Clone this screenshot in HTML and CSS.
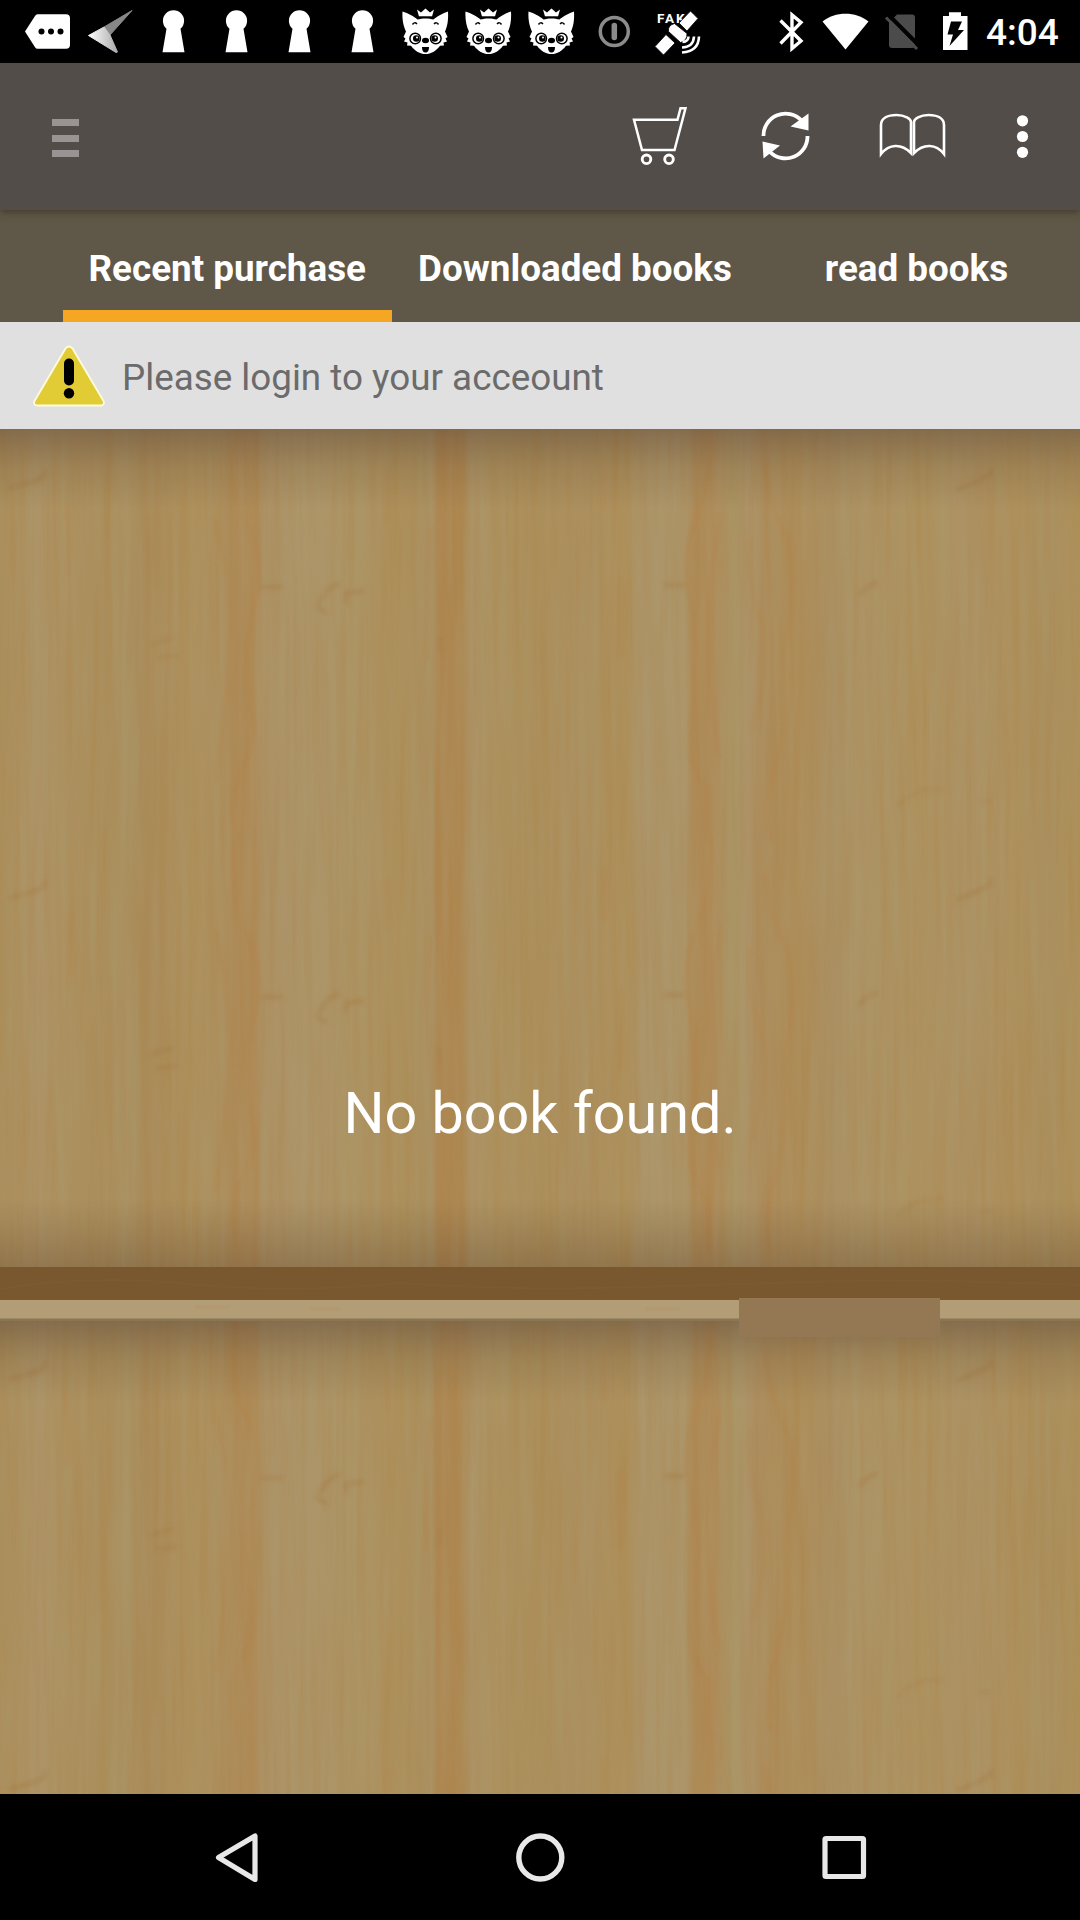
FILE: index.html
```html
<!DOCTYPE html>
<html lang="en">
<head>
<meta charset="utf-8">
<title>Bookshelf</title>
<link rel="stylesheet" href="styles.css">
</head>
<body>
<svg class="defs" width="0" height="0" aria-hidden="true">
  <defs>
    <symbol id="keyhole" viewBox="0 0 63 63"><path fill="#fff" d="M24.5 28.8a10.6 10.6 0 1 1 14 0L42.500 52.300h-22z"/></symbol>
    <symbol id="fox" viewBox="0 0 63 63">
      <path fill="#fff" d="M23 9.500l4 3 4.500-4 4.500 4 4-3-2 7H25z"/>
      <path fill="none" stroke="#000" stroke-width="1.500" d="M24 17.300h15"/>
      <path fill="#fff" d="M8.500 11.500C14 13 20 16.500 23.500 19.500 28 18 35 18 39.500 19.500 43 16.500 49 13 54 11.500 54.500 20 53.500 26 51 31.500c1 2 1.500 3.500 2.500 5.500l-2 1.500 1.500 3-3.500 1 .5 3-4 .2C42 51 37 54 31.500 54S21 51 17 45.700l-4-.2.500-3-3.500-1 1.500-3-2-1.500c1-2 1.500-3.500 2.500-5.500C9.500 26 8 20 8.500 11.500z"/>
      <g fill="none" stroke="#000" stroke-width="1.500"><circle cx="21.200" cy="38.500" r="5.300"/><circle cx="41.800" cy="38.500" r="5.300"/><path d="M18.500 24.500q2-3 4.500-.5M40 24q2.500-2.500 4.500.5"/></g>
      <circle cx="22.300" cy="38.500" r="3.300"/><circle cx="40.700" cy="38.500" r="3.300"/>
      <circle cx="23" cy="37.500" r="1" fill="#fff"/><circle cx="41.500" cy="37.500" r="1" fill="#fff"/>
      <ellipse cx="31.500" cy="40.500" rx="3.500" ry="2.700"/><path d="M28 47h7c0 3.500-1 5.500-3.500 5.500S28 50.500 28 47z"/>
    </symbol>
  </defs>
</svg>

<div class="screen">
  <header class="status">
    <div class="notifications">
      <svg viewBox="0 0 63 63"><path fill="#fff" d="M21.500 14.300H50q4 0 4 4v26.500q0 4-4 4H21.500q-1.500 0-2.500-1.500L9 31.500 19 16q1-1.700 2.500-1.700z"/><circle cx="25.500" cy="31.500" r="3"/><circle cx="35" cy="31.500" r="3"/><circle cx="44.500" cy="31.500" r="3"/></svg>
      <svg viewBox="0 0 63 63">
        <linearGradient id="wing"><stop stop-color="#fff"/><stop offset="1" stop-color="#aaa"/></linearGradient>
        <path fill="#888" stroke="#888" stroke-linejoin="round" d="M25 27L53 10.500 31 35z"/>
        <path fill="url(#wing)" stroke="url(#wing)" stroke-linejoin="round" d="M9.500 35.500L25 27l6 8 7.500 17-1.500.5z"/>
      </svg>
      <svg><use href="#keyhole"/></svg>
      <svg><use href="#keyhole"/></svg>
      <svg><use href="#keyhole"/></svg>
      <svg><use href="#keyhole"/></svg>
      <svg><use href="#fox"/></svg>
      <svg><use href="#fox"/></svg>
      <svg><use href="#fox"/></svg>
      <svg viewBox="0 0 63 63"><circle cx="31.300" cy="31.500" r="14" fill="none" stroke="#8b8b8b" stroke-width="3.500"/><path stroke="#8b8b8b" stroke-width="5.500" stroke-linecap="round" d="M31.300 25.500v12"/></svg>
      <svg viewBox="0 0 63 63">
        <text class="fake-label" x="11" y="23" textLength="37">FAKE</text>
        <g fill="#fff" stroke="#000" stroke-width=".8">
          <path d="M33 23L44.500 11l7.500 7.500L41 31z"/><path d="M9 46.500L20 34.500l9 8.500-11.500 12z"/><path d="M22.500 31.500q-1-6 6-8l12.500 10q.5 7-6.500 9z"/>
        </g>
        <path fill="none" stroke="#fff" stroke-width="2.600" d="M36.500 42q6-.5 6-5.500M36 47.500q11.500-.5 12-11M36 52.500q16.500-1 17-16"/>
      </svg>
    </div>
    <div class="system">
      <svg class="bt" viewBox="0 0 48 63"><path fill="none" stroke="#fff" stroke-width="3.400" d="M12.500 20.500L33 41l-9 7.500V15l9 7.500-20.500 21"/></svg>
      <svg class="wifi" viewBox="0 0 59 63"><path fill="#fff" d="M6.500 21.500C19 11 40 11 52.500 21.500L29.500 49.500z"/></svg>
      <svg class="sim" viewBox="0 0 55 63"><path fill="#4b4b4b" d="M22 14.500h15q3 0 3 3V45q0 3-3 3H17q-3 0-3-3V22.500z"/><path stroke="#000" stroke-width="4" d="M15 16.500L45 46.500"/><path stroke="#4b4b4b" stroke-width="3" d="M11 17.500L42 49"/></svg>
      <svg class="batt" viewBox="0 0 50 63"><path fill="#fff" d="M13 16h6v-3.700h12V16h6.500v34H13z"/><path d="M21 21.500h11l-4 8.500h6L19.500 46l3.500-11.500h-5.500z"/></svg>
      <span class="clock">4:04</span>
    </div>
  </header>

  <div class="toolbar">
    <div class="menu"><i></i><i></i><i></i></div>
    <div class="actions">
      <svg viewBox="0 0 126 147"><g fill="none" stroke="#fff"><path stroke-width="2.500" d="M37 56.800h43.500l3-11.600h5L77.500 87H45z"/><circle cx="49.500" cy="96.300" r="4.300" stroke-width="2.900"/><circle cx="72" cy="96.300" r="4.300" stroke-width="2.900"/></g></svg>
      <svg viewBox="0 0 126 147"><path fill="none" stroke="#fff" stroke-width="3.800" d="M40.500 73a22 22 0 0 1 38-15.500M84.500 73A22 22 0 0 1 46.500 88.500"/><path fill="#fff" d="M85.500 50.500v17L67.500 63.500zM39.500 78.500l17.500 4L40.500 95.500z"/></svg>
      <svg viewBox="0 0 126 147"><path fill="none" stroke="#fff" stroke-width="2.600" d="M32 91V62c0-7 7-10 15.500-10S62 56 62 59v31c-10-10-22-9-30 1zM65 90V59c0-3 6-7 14.500-7S95 55 95 62v29C87 81 75 80 65 90z"/></svg>
      <svg class="more" viewBox="0 0 95 147"><g fill="#fff"><circle cx="47.500" cy="57.800" r="5.600"/><circle cx="47.500" cy="73.500" r="5.600"/><circle cx="47.500" cy="89.300" r="5.600"/></g></svg>
    </div>
  </div>

  <nav class="tabs">
    <a class="tab active">Recent purchase</a>
    <a class="tab">Downloaded books</a>
    <a class="tab last">read books</a>
  </nav>

  <div class="notice">
    <svg class="warn" viewBox="0 0 72 62"><path fill="#e2cc36" stroke="#fffbdc" stroke-width="1.800" stroke-linejoin="round" d="M32.500 3.500q3.500-4 7 0L70.500 56q1.500 4-2.500 4.500H4q-4-.5-2.500-4.500z"/><path stroke="#000" stroke-width="10" stroke-linecap="round" d="M36 18.500v17"/><circle cx="36" cy="48.300" r="5.200"/></svg>
    <span>Please login to your acceount</span>
  </div>

  <main class="shelf">
    <svg class="wood" viewBox="0 0 1080 1365" preserveAspectRatio="none">
      <defs>
        <linearGradient id="planks" gradientUnits="userSpaceOnUse" x1="0" x2="1080" y1="0" y2="0">
          <stop offset="0" stop-color="#aa8f5c"/><stop offset=".02" stop-color="#ac9160"/><stop offset=".035" stop-color="#ad9468"/><stop offset=".055" stop-color="#ac9261"/>
          <stop offset=".1" stop-color="#aa8e5b"/><stop offset=".115" stop-color="#aa9364"/><stop offset=".135" stop-color="#a98b59"/><stop offset=".18" stop-color="#ad915d"/>
          <stop offset=".205" stop-color="#ac905f"/><stop offset=".218" stop-color="#ad8a57"/><stop offset=".236" stop-color="#ae8b58"/><stop offset=".244" stop-color="#ac9265"/>
          <stop offset=".28" stop-color="#ac9569"/><stop offset=".33" stop-color="#ac9464"/><stop offset=".37" stop-color="#ac905b"/><stop offset=".4" stop-color="#aa9263"/>
          <stop offset=".405" stop-color="#ad8650"/><stop offset=".428" stop-color="#ad8852"/><stop offset=".437" stop-color="#ac9467"/><stop offset=".46" stop-color="#ac925f"/>
          <stop offset=".5" stop-color="#ab8f5b"/><stop offset=".54" stop-color="#ab9161"/><stop offset=".58" stop-color="#ad8f59"/><stop offset=".594" stop-color="#ac956a"/>
          <stop offset=".635" stop-color="#ac9569"/><stop offset=".643" stop-color="#ad8a56"/><stop offset=".66" stop-color="#ae8c5a"/><stop offset=".68" stop-color="#aa9565"/>
          <stop offset=".69" stop-color="#ac9469"/><stop offset=".705" stop-color="#ac8d5d"/><stop offset=".74" stop-color="#ad8d59"/><stop offset=".77" stop-color="#aa9062"/>
          <stop offset=".79" stop-color="#ac9466"/><stop offset=".85" stop-color="#ad925f"/><stop offset=".9" stop-color="#ac9365"/><stop offset=".94" stop-color="#ad905c"/>
          <stop offset=".97" stop-color="#aa905f"/><stop offset="1" stop-color="#ad905a"/>
        </linearGradient>
        <linearGradient id="under" x1="0" x2="0" y1="0" y2="1"><stop stop-color="#5c4637" stop-opacity=".5"/><stop offset=".5" stop-color="#6a5032" stop-opacity=".2"/><stop offset="1" stop-color="#6a5032" stop-opacity="0"/></linearGradient>
        <linearGradient id="above" x1="0" x2="0" y1="0" y2="1"><stop stop-color="#6a5032" stop-opacity="0"/><stop offset="1" stop-color="#65492f" stop-opacity=".37"/></linearGradient>
        <filter id="grain" x="0" y="0" width="1" height="1" color-interpolation-filters="sRGB">
          <feTurbulence type="fractalNoise" baseFrequency=".15 .005" numOctaves="3" seed="7"/>
          <feColorMatrix values="0 0 0 0 .68  0 0 0 0 .5  0 0 0 0 .26  1.500 0 0 0 -.57"/>
        </filter>
        <filter id="pale" x="0" y="0" width="1" height="1" color-interpolation-filters="sRGB">
          <feTurbulence type="fractalNoise" baseFrequency=".1 .006" numOctaves="2" seed="21"/>
          <feColorMatrix values="0 0 0 0 .68  0 0 0 0 .6  0 0 0 0 .43  1.600 0 0 0 -.64"/>
        </filter>
        <filter id="soft" filterUnits="userSpaceOnUse" x="-10" y="-10" width="1100" height="440"><feGaussianBlur stdDeviation="2"/></filter>
        <g id="figure" fill="none" stroke="#b1834b" stroke-linecap="round" filter="url(#soft)">
          <g stroke-width="5" stroke-opacity=".6">
            <path d="M236 0Q226 60 246 95T252 185Q240 235 250 270T242 340Q225 375 238 410"/>
            <path d="M711 0Q712 50 696 90T692 180Q698 240 692 290T708 360V410"/>
            <path d="M766 35Q767 70 784 105T784 225Q790 290 776 335T770 410"/>
          </g>
          <g stroke-width="4" stroke-opacity=".45">
            <path d="M214 90Q228 140 230 190T216 350"/><path d="M722 85Q706 150 708 220T720 330"/>
            <path d="M66 75Q72 110 67 145"/><path d="M751 110Q746 150 760 190T752 300"/>
            <path d="M430 100Q424 180 427 230"/><path d="M388 40V90"/><path d="M604 30V80"/><path d="M621 150V230"/>
          </g>
          <g stroke="#a67e46" stroke-width="5" stroke-opacity=".5">
            <path d="M10 59Q22 56 32 53T45 46V42"/><path d="M958 60Q968 57 978 52T991 45V41"/>
            <path d="M263 158H280M320 172Q328 158 338 155M318 178L325 183M346 172V164L362 162"/>
            <path d="M152 215L172 209M158 229L176 227M440 210V223M666 156H682M860 165Q866 157 876 154"/>
            <path stroke-opacity=".3" d="M898 377Q914 358 942 360M980 372H990"/>
          </g>
        </g>
      </defs>
      <rect width="1080" height="1365" fill="url(#planks)"/>
      <use href="#figure"/>
      <use href="#figure" y="410"/>
      <use href="#figure" y="891"/>
      <svg y="1301" width="1080" height="64"><use href="#figure"/></svg>
      <rect width="1080" height="1365" filter="url(#grain)" opacity=".42"/>
      <rect width="1080" height="1365" filter="url(#pale)" opacity=".55"/>
      <rect width="1080" height="80" fill="url(#under)"/>
      <rect y="770" width="1080" height="68" fill="url(#above)"/>
      <rect y="891" width="1080" height="82" fill="url(#under)"/>
      <rect y="838" width="1080" height="33" fill="#79582f"/>
      <path stroke="#866038" stroke-width="2" stroke-opacity=".25" fill="none" d="M0 860Q90 845 190 855T400 854Q520 862 640 858T840 852T1080 856"/>
      <rect y="871" width="1080" height="20" fill="#b29d77"/>
      <path stroke="#b58f5c" stroke-opacity=".25" stroke-width="4" fill="none" d="M195 878H230M310 880H340M645 880H680"/>
      <rect y="889.500" width="1080" height="2.500" fill="#8b7653"/>
    </svg>
    <div class="patch"></div>
    <p class="empty">No book found.</p>
  </main>

  <footer class="navbar">
    <svg viewBox="0 0 304 126"><path fill="none" stroke="#e8e8e8" stroke-width="5.200" stroke-linejoin="round" d="M134.500 63.500L171 42v43.500z"/></svg>
    <svg viewBox="0 0 304 126"><circle cx="152.300" cy="63.500" r="21.500" fill="none" stroke="#e8e8e8" stroke-width="5.400"/></svg>
    <svg viewBox="0 0 304 126"><rect x="133" y="44.500" width="38.500" height="38" rx="1" fill="none" stroke="#e8e8e8" stroke-width="5.200"/></svg>
  </footer>
</div>
</body>
</html>
```
FILE: styles.css
```css
* { box-sizing: border-box; }
body { margin: 0; background: #000; font-family: Roboto, "Liberation Sans", sans-serif; }
.defs { display: block; height: 0; }
svg { display: block; flex: none; }

.screen { width: 1080px; height: 1920px; display: flex; flex-direction: column; overflow: hidden; }

.status { height: 63px; flex: none; display: flex; justify-content: space-between; padding: 0 21px 0 16px; background: #000; }
.notifications, .system { display: flex; }
.notifications svg { width: 63px; height: 63px; }
.system svg { height: 63px; }
.bt { width: 48px; }
.wifi { width: 59px; }
.sim { width: 55px; }
.batt { width: 50px; }
.clock { width: 79px; padding-left: 6px; color: #fff; font-size: 37px; font-weight: 500; line-height: 66px; white-space: nowrap; }
.fake-label { fill: #fff; font-size: 13.500px; font-weight: 700; }

.toolbar { position: relative; z-index: 1; height: 147px; flex: none; display: flex; justify-content: space-between; padding: 0 10px 0 52px; background: #524d49; box-shadow: 0 3px 7px rgba(50, 35, 20, .5); }
.menu { display: flex; flex-direction: column; gap: 8.300px; padding-top: 56px; }
.menu i { width: 27px; height: 7.300px; background: #979493; }
.actions { display: flex; }
.actions svg { width: 126px; height: 147px; }
.actions .more { width: 95px; }

.tabs { height: 112px; flex: none; display: flex; padding-left: 63px; background: #5f5848; }
.tab { display: flex; align-items: center; justify-content: center; width: 328.500px; padding-top: 16px; border-bottom: 12px solid transparent; color: #fff; font-size: 36.800px; font-weight: 700; white-space: nowrap; }
.tab + .tab { width: 367px; }
.tabs .last { width: 316px; }
.tab.active { border-bottom-color: #f5a623; }

.notice { height: 107px; flex: none; display: flex; align-items: center; gap: 17px; padding-left: 33px; background: #e0e0e0; color: #6b6b6b; font-size: 36.800px; }
.notice span { padding-top: 4px; }
.warn { width: 72px; height: 62px; }

.shelf { flex: 1; display: grid; position: relative; overflow: hidden; }
.wood, .empty { grid-area: 1 / 1; }
.wood { width: 1080px; height: 1365px; }
.patch { position: absolute; left: 739px; top: 869px; width: 201px; height: 39px; background: #947853; }
.empty { place-self: center; z-index: 1; margin: 0; padding-top: 5px; color: #fff; font-size: 57.500px; line-height: 68px; }

.navbar { height: 126px; flex: none; display: flex; justify-content: center; background: #000; }
.navbar svg { width: 304px; height: 126px; }
```
